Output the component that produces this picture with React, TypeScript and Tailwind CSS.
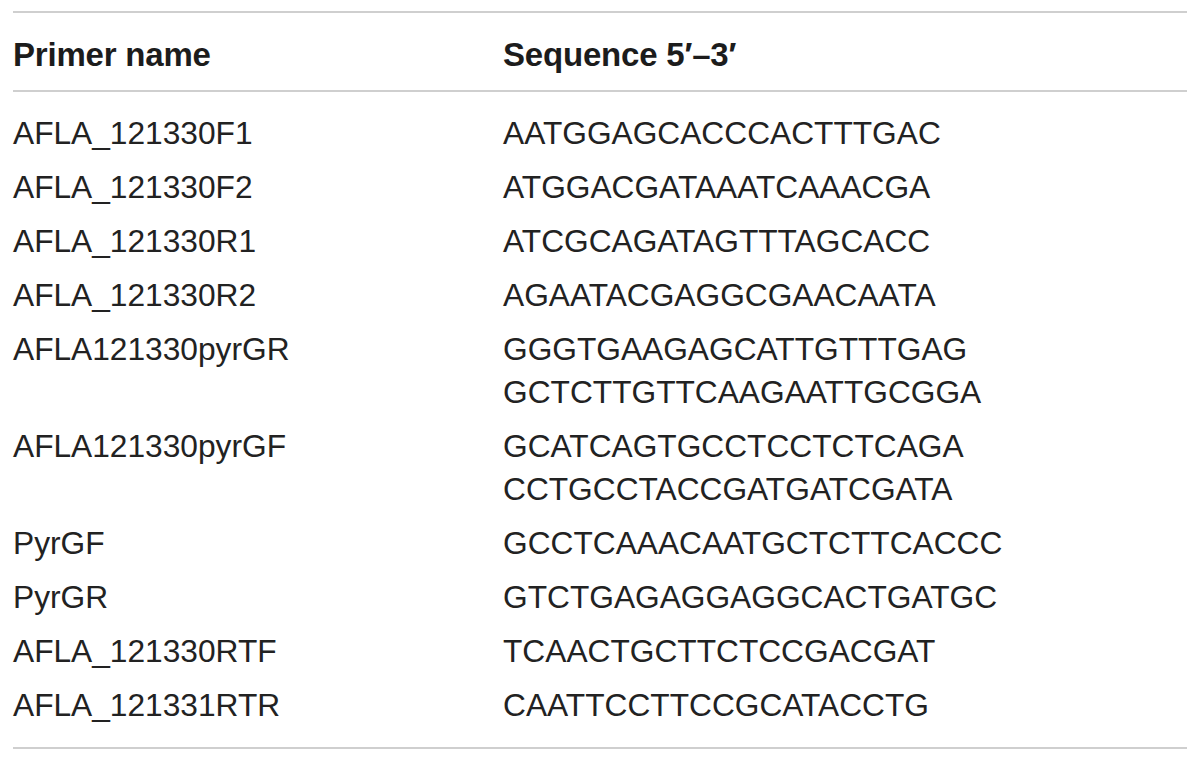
import React from "react";

type Primer = { name: string; seq: string[] };

const primers: Primer[] = [
  { name: "AFLA_121330F1", seq: ["AATGGAGCACCCACTTTGAC"] },
  { name: "AFLA_121330F2", seq: ["ATGGACGATAAATCAAACGA"] },
  { name: "AFLA_121330R1", seq: ["ATCGCAGATAGTTTAGCACC"] },
  { name: "AFLA_121330R2", seq: ["AGAATACGAGGCGAACAATA"] },
  { name: "AFLA121330pyrGR", seq: ["GGGTGAAGAGCATTGTTTGAG", "GCTCTTGTTCAAGAATTGCGGA"] },
  { name: "AFLA121330pyrGF", seq: ["GCATCAGTGCCTCCTCTCAGA", "CCTGCCTACCGATGATCGATA"] },
  { name: "PyrGF", seq: ["GCCTCAAACAATGCTCTTCACCC"] },
  { name: "PyrGR", seq: ["GTCTGAGAGGAGGCACTGATGC"] },
  { name: "AFLA_121330RTF", seq: ["TCAACTGCTTCTCCGACGAT"] },
  { name: "AFLA_121331RTR", seq: ["CAATTCCTTCCGCATACCTG"] },
];

const App: React.FC = () => {
  return (
    <div className="w-[1200px] h-[764px] bg-white pt-[11px] px-[13px] font-['Liberation_Sans',Arial,sans-serif] text-[#222]">
      <div className="border-t-2 border-b-2 border-[#cfcfcf]">
        {/* header */}
        <div className="grid grid-cols-[490px_1fr] h-[79px] items-center border-b-2 border-[#cfcfcf] text-[33px] font-bold tracking-[-0.2px] pt-[6px] text-[#1c1c1c]">
          <div>Primer name</div>
          <div>Sequence 5′–3′</div>
        </div>

        {/* body */}
        <div className="pt-[14px] pb-[15px] text-[31.7px] leading-[43px]">
          {primers.map((p) => (
            <div key={p.name} className="grid grid-cols-[490px_1fr] py-[5.5px]">
              <div>{p.name}</div>
              <div>
                {p.seq.map((s) => (
                  <div key={s}>{s}</div>
                ))}
              </div>
            </div>
          ))}
        </div>
      </div>
    </div>
  );
};

export default App;
